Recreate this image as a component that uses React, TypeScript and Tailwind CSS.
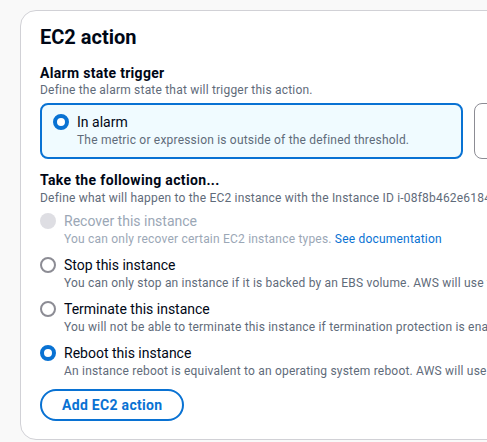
import React from "react";

const font = { fontFamily: "Roboto, 'Liberation Sans', Arial, sans-serif" };

function Radio({ state }: { state: "on" | "off" | "disabled" }) {
  if (state === "on")
    return (
      <span className="box-border block w-[16px] h-[16px] rounded-full border-[4px] border-[#0972d3] bg-white shrink-0" />
    );
  if (state === "disabled")
    return <span className="box-border block w-[16px] h-[16px] rounded-full bg-[#dedee3] shrink-0" />;
  return (
    <span className="box-border block w-[16px] h-[16px] rounded-full border-[2px] border-[#8c8c94] bg-white shrink-0" />
  );
}

function Option({
  label,
  desc,
  state,
  link,
}: {
  label: string;
  desc: string;
  state: "on" | "off" | "disabled";
  link?: string;
}) {
  const dis = state === "disabled";
  return (
    <div className="flex gap-[8px]">
      <div className="h-[20px] flex items-center">
        <Radio state={state} />
      </div>
      <div className="flex flex-col whitespace-nowrap">
        <span className={`text-[14px] leading-[20px] ${dis ? "text-[#9ba7b6]" : "text-[#000716]"}`}>{label}</span>
        <span
          className={`text-[12px] leading-[16px] tracking-[0.2px] ${dis ? "text-[#9ba7b6]" : "text-[#5f6b7a]"}`}
        >
          {desc}
          {link && <span className="text-[#0972d3]"> {link}</span>}
        </span>
      </div>
    </div>
  );
}

export default function App() {
  return (
    <div className="w-[487px] h-[442px] overflow-hidden bg-[#f9f9f9] pt-[10px] pl-[20px]" style={font}>
      <div className="w-[700px] h-[430px] box-border border border-[#d1d1d6] rounded-[16px] bg-white pl-[19px] pt-[14px]">
        <h2 className="text-[20px] leading-[24px] font-bold text-[#000716]">EC2 action</h2>
        <div className="mt-[15px] text-[14px] leading-[18px] font-bold tracking-[0.3px] text-[#000716]">
          Alarm state trigger
        </div>
        <div className="text-[12px] leading-[16px] tracking-[0.2px] text-[#5f6b7a] whitespace-nowrap">
          Define the alarm state that will trigger this action.
        </div>
        <div className="mt-[5px] flex gap-[11px]">
          <div className="box-border w-[423px] h-[56px] shrink-0 border-2 border-[#0972d3] rounded-[8px] bg-[#f0fbff] pl-[11px] pt-[7px] flex gap-[8px]">
            <div className="h-[20px] flex items-center">
              <Radio state="on" />
            </div>
            <div className="flex flex-col whitespace-nowrap">
              <span className="text-[14px] leading-[20px] text-[#000716]">In alarm</span>
              <span className="text-[12px] leading-[16px] tracking-[0.2px] text-[#5f6b7a]">
                The metric or expression is outside of the defined threshold.
              </span>
            </div>
          </div>
          <div className="box-border w-[200px] h-[56px] shrink-0 border border-[#8c8c94] rounded-[8px] bg-white" />
        </div>
        <div className="mt-[11px] text-[14px] leading-[20px] font-bold tracking-[0.35px] text-[#000716]">
          Take the following action...
        </div>
        <div className="text-[12px] leading-[16px] tracking-[0.2px] text-[#5f6b7a] whitespace-nowrap">
          Define what will happen to the EC2 instance with the Instance ID i-08f8b462e6184a2c1 when the alarm is triggered.
        </div>
        <div className="mt-[5px] flex flex-col gap-[8px]">
          <Option
            state="disabled"
            label="Recover this instance"
            desc="You can only recover certain EC2 instance types."
            link="See documentation"
          />
          <Option
            state="off"
            label="Stop this instance"
            desc="You can only stop an instance if it is backed by an EBS volume. AWS will use the instance's operating system shutdown command."
          />
          <Option
            state="off"
            label="Terminate this instance"
            desc="You will not be able to terminate this instance if termination protection is enabled."
          />
          <Option
            state="on"
            label="Reboot this instance"
            desc="An instance reboot is equivalent to an operating system reboot. AWS will use the instance's operating system."
          />
        </div>
        <button className="mt-[10px] box-border h-[32px] px-[20px] rounded-full border-2 border-[#0972d3] bg-white text-[14px] leading-[20px] font-bold tracking-[0.3px] text-[#0972d3]">
          Add EC2 action
        </button>
      </div>
    </div>
  );
}
